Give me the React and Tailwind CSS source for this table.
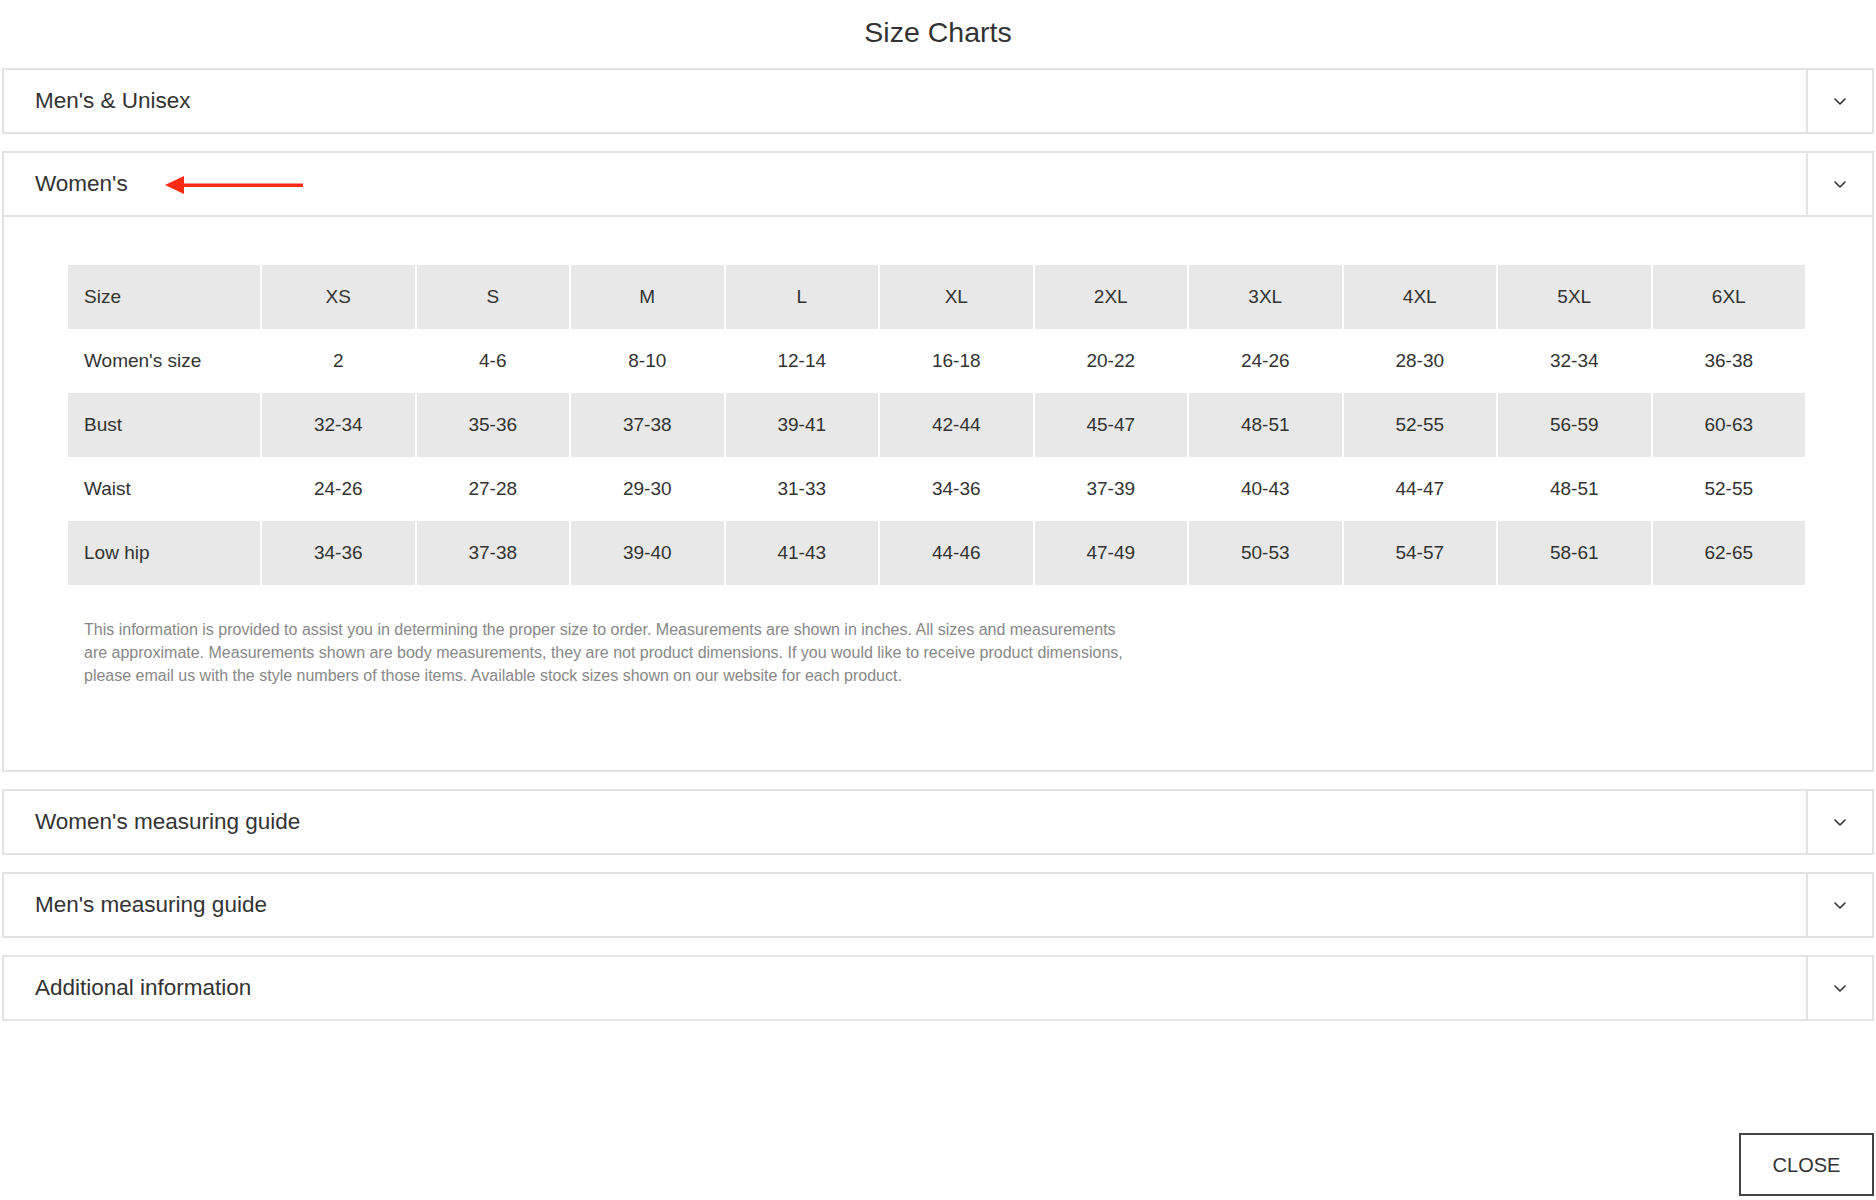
import { useState } from "react"

const sizes = ["XS", "S", "M", "L", "XL", "2XL", "3XL", "4XL", "5XL", "6XL"]

const rows = [
    { label: "Women's size", values: ["2", "4-6", "8-10", "12-14", "16-18", "20-22", "24-26", "28-30", "32-34", "36-38"] },
    { label: "Bust", values: ["32-34", "35-36", "37-38", "39-41", "42-44", "45-47", "48-51", "52-55", "56-59", "60-63"] },
    { label: "Waist", values: ["24-26", "27-28", "29-30", "31-33", "34-36", "37-39", "40-43", "44-47", "48-51", "52-55"] },
    { label: "Low hip", values: ["34-36", "37-38", "39-40", "41-43", "44-46", "47-49", "50-53", "54-57", "58-61", "62-65"] },
]

const sections = ["Men's & Unisex", "Women's", "Women's measuring guide", "Men's measuring guide", "Additional information"]

function Chevron(){
    return (
        <svg width="12" height="7" viewBox="0 0 12 7" fill="none">
            <path d="M1 1l5 5 5-5" stroke="#333" strokeWidth="1.6" strokeLinecap="round" strokeLinejoin="round" />
        </svg>
    )
}

function RedArrow(){
    return (
        <svg width="138" height="20" viewBox="0 0 138 20" className="ml-[37px] mt-[2px]">
            <polygon points="0,10 19,1 19,19" fill="#ff2a12" />
            <rect x="17" y="8.5" width="121" height="3.5" fill="#ff2a12" />
        </svg>
    )
}

function SizeTable(){
    return (
        <div className="grid grid-cols-[192px_repeat(10,minmax(0,1fr))] gap-x-[2px] text-[19px] text-[#333]">
            <div className="h-[64px] flex items-center pl-[16px] bg-[#e8e8e8]">Size</div>
            {sizes.map((size) => (
                <div key={size} className="h-[64px] flex items-center justify-center bg-[#e8e8e8]">{size}</div>
            ))}
            {rows.map((row, index) => {
                const shaded = index % 2 === 1
                return [
                    <div key={row.label} className={shaded ? "h-[64px] flex items-center pl-[16px] bg-[#e8e8e8]" : "h-[64px] flex items-center pl-[16px] bg-white"}>
                        {row.label}
                    </div>,
                    ...row.values.map((value, i) => (
                        <div key={row.label + i} className={shaded ? "h-[64px] flex items-center justify-center bg-[#e8e8e8]" : "h-[64px] flex items-center justify-center bg-white"}>
                            {value}
                        </div>
                    )),
                ]
            })}
        </div>
    )
}

function Section({title, open, onToggle, children}){
    return (
        <div className="border-2 border-[#e3e3e3] bg-white">
            <div
                className={open ? "flex h-[64px] border-b-2 border-[#e3e3e3] cursor-pointer" : "flex h-[62px] cursor-pointer"}
                onClick={onToggle}
            >
                <div className="flex-1 flex items-center pl-[31px] text-[22.5px] text-[#333]">
                    {title}
                    {title === "Women's" && <RedArrow />}
                </div>
                <div className="w-[66px] border-l-2 border-[#e3e3e3] flex items-center justify-center">
                    <Chevron />
                </div>
            </div>
            {open && children}
        </div>
    )
}

export default function App(){
    const [active, setActive] = useState("Women's")

    function handleToggle(title){
        setActive(active === title ? "" : title)
    }

    return (
        <div className="min-h-[1200px] bg-white px-[2px] font-['Liberation_Sans',Arial,Helvetica,sans-serif]">
            <div className="h-[68px] flex items-center justify-center pb-[4px] text-[28.5px] text-[#333]">
                Size Charts
            </div>
            <div className="flex flex-col gap-[17px]">
                {sections.map((title) => (
                    <Section key={title} title={title} open={active === title} onToggle={() => handleToggle(title)}>
                        {title === "Women's" && (
                            <div className="pt-[48px] pl-[64px] pr-[67px] pb-[83px]">
                                <SizeTable />
                                <p className="mt-[33px] pl-[16px] w-[1060px] text-[16px] leading-[23px] text-[#888]">
                                    This information is provided to assist you in determining the proper size to order. Measurements are shown in inches. All sizes and measurements are approximate. Measurements shown are body measurements, they are not product dimensions. If you would like to receive product dimensions, please email us with the style numbers of those items. Available stock sizes shown on our website for each product.
                                </p>
                            </div>
                        )}
                    </Section>
                ))}
            </div>
            <div className="flex justify-end mt-[112px]">
                <button className="w-[135px] h-[63px] border-2 border-[#444] text-[20px] text-[#333] bg-white">
                    CLOSE
                </button>
            </div>
        </div>
    )
}
